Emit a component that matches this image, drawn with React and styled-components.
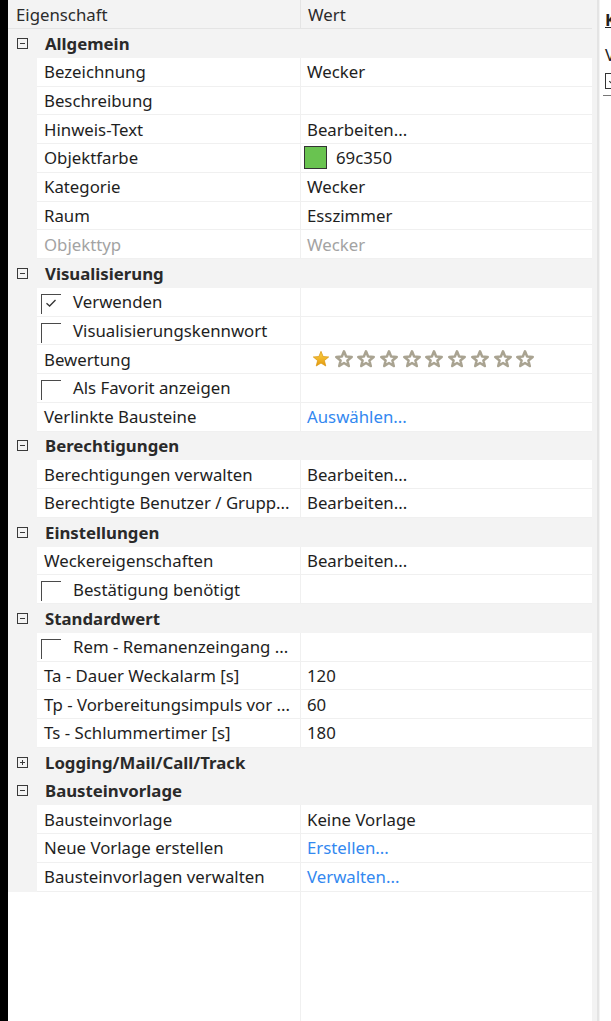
import React from 'react';
import styled, { createGlobalStyle } from 'styled-components';

const GlobalStyle = createGlobalStyle`
  html, body {
    margin: 0;
    padding: 0;
    background: #ffffff;
  }
  body {
    font-family: "Noto Sans", "Open Sans", sans-serif;
    font-size: 16.8px;
    color: #1e1e1e;
  }
`;

const ROW = '28.75px';

const Page = styled.div`
  display: flex;
  width: 611px;
  height: 1021px;
  overflow: hidden;
`;

const Edge = styled.div`
  width: 8px;
  flex: none;
  background: #000;
`;

const Grid = styled.div`
  width: 584px;
  flex: none;
  display: flex;
  flex-direction: column;
  background: #fff;
`;

const Header = styled.div`
  display: grid;
  grid-template-columns: 292px 1fr;
  height: 29px;
  flex: none;
  background: #f3f3f3;
  box-sizing: border-box;
  border-bottom: 1px solid #e4e4e4;
  color: #2b2b2b;

  span {
    display: flex;
    align-items: center;
    padding-left: 8px;
  }
  span + span {
    border-left: 1px solid #e4e4e4;
    padding-left: 7px;
  }
`;

const Rows = styled.div`
  display: flex;
  flex-direction: column;
`;

const Category = styled.div`
  display: flex;
  align-items: center;
  height: ${ROW};
  background: #f3f3f3;
  font-weight: 700;
  color: #2a2a2a;
`;

const Expander = styled.span`
  position: relative;
  width: 11px;
  height: 11px;
  box-sizing: border-box;
  border: 1px solid #3a3a3a;
  margin: 0 17px 0 9px;
  flex: none;

  &::before,
  &::after {
    content: '';
    position: absolute;
    background: #3a3a3a;
  }
  &::before {
    left: 2px;
    right: 2px;
    top: 4px;
    height: 1px;
  }
  &::after {
    display: ${(p) => (p.$open ? 'none' : 'block')};
    top: 2px;
    bottom: 2px;
    left: 4px;
    width: 1px;
  }
`;

const Item = styled.div`
  display: grid;
  grid-template-columns: 29px 263px 1fr;
  height: ${ROW};
  box-sizing: border-box;
`;

const Indent = styled.span`
  background: #f3f3f3;
`;

const Name = styled.span`
  display: flex;
  align-items: center;
  background: #fff;
  padding-left: ${(p) => (p.$check ? '4px' : '7px')};
  border-bottom: 1px solid #f0f0f0;
  color: ${(p) => (p.$disabled ? '#a3a3a3' : '#1e1e1e')};
  white-space: nowrap;
  overflow: hidden;
`;

const Value = styled.span`
  display: flex;
  align-items: center;
  gap: 9px;
  background: #fff;
  padding-left: 6px;
  border-left: 1px solid #f0f0f0;
  border-bottom: 1px solid #f0f0f0;
  color: ${(p) => (p.$disabled ? '#a3a3a3' : p.$link ? '#3388f0' : '#1e1e1e')};
  white-space: nowrap;
`;

const CheckBox = styled.span`
  width: 20px;
  height: 20px;
  margin-top: 6px;
  align-self: flex-start;
  box-sizing: border-box;
  border-top: 1.5px solid #4a4a4a;
  border-left: 1.5px solid #4a4a4a;
  margin-right: 12px;
  flex: none;
  display: flex;
  align-items: center;
  justify-content: center;

  svg {
    margin: -2px 0 0 -1px;
  }
`;

const Swatch = styled.span`
  width: 23px;
  height: 23px;
  margin-left: -3px;
  box-sizing: border-box;
  border: 1px solid #333;
  background: ${(p) => p.$color};
  flex: none;
`;

const Stars = styled.span`
  display: flex;
  gap: 4.7px;
  margin-left: 5px;
`;

const Filler = styled.div`
  flex: 1;
  display: grid;
  grid-template-columns: 292px 1fr;

  span + span {
    border-left: 1px solid #f0f0f0;
  }
`;

const Splitter = styled.div`
  width: 8px;
  flex: none;
  background: linear-gradient(
    to right,
    #f3f3f3 0,
    #f3f3f3 5px,
    #e4e4e4 5px,
    #e4e4e4 7px,
    #f3f3f3 7px
  );
`;

const Side = styled.div`
  flex: 1;
  background: #fff;
  overflow: hidden;
  padding-left: 5px;
  display: flex;
  flex-direction: column;
  white-space: nowrap;
`;

const SideLabel = styled.div`
  height: 20px;
  margin-top: ${(p) => p.$top}px;
  line-height: 20px;
  text-decoration: ${(p) => (p.$underline ? 'underline' : 'none')};
  font-weight: ${(p) => (p.$underline ? 700 : 400)};
  color: #222;
`;

const SideCheck = styled.div`
  width: 16px;
  height: 16px;
  margin-top: 8px;
  box-sizing: border-box;
  border: 1.5px solid #333;
  display: flex;
  align-items: center;
  justify-content: center;
`;

const SideRule = styled.div`
  height: 1px;
  margin: 6px 0 0 -2px;
  background: #777;
`;

const Tick = ({ size = 12 }) => (
  <svg width={size} height={size} viewBox="0 0 12 12">
    <path d="M1.5 6.2 L4.6 9 L10.5 3" fill="none" stroke="#333" strokeWidth="1.3" />
  </svg>
);

const STAR = 'M10 1.5 L12.35 7.26 L18.56 7.72 L13.8 11.74 L15.29 17.78 L10 14.5 L4.71 17.78 L6.2 11.74 L1.44 7.72 L7.65 7.26 Z';

const Star = ({ filled }) => (
  <svg width="18" height="18" viewBox="0 0 20 20">
    <defs>
      <linearGradient id="gold" x1="0" y1="0" x2="0" y2="1">
        <stop offset="0" stopColor="#fcd34a" />
        <stop offset="1" stopColor="#e49a0c" />
      </linearGradient>
    </defs>
    {filled ? (
      <path d={STAR} fill="url(#gold)" stroke="#d99510" strokeWidth="0.8" strokeLinejoin="round" />
    ) : (
      <path d={STAR} fill="#fff" stroke="#a9a391" strokeWidth="2.8" strokeLinejoin="round" />
    )}
  </svg>
);

const sections = [
  {
    title: 'Allgemein',
    items: [
      { name: 'Bezeichnung', value: 'Wecker' },
      { name: 'Beschreibung', value: '' },
      { name: 'Hinweis-Text', value: 'Bearbeiten...' },
      { name: 'Objektfarbe', value: '69c350', color: '#69c350' },
      { name: 'Kategorie', value: 'Wecker' },
      { name: 'Raum', value: 'Esszimmer' },
      { name: 'Objekttyp', value: 'Wecker', disabled: true },
    ],
  },
  {
    title: 'Visualisierung',
    items: [
      { name: 'Verwenden', check: true, checked: true },
      { name: 'Visualisierungskennwort', check: true },
      { name: 'Bewertung', rating: 1 },
      { name: 'Als Favorit anzeigen', check: true },
      { name: 'Verlinkte Bausteine', value: 'Auswählen...', link: true },
    ],
  },
  {
    title: 'Berechtigungen',
    items: [
      { name: 'Berechtigungen verwalten', value: 'Bearbeiten...' },
      { name: 'Berechtigte Benutzer / Grupp...', value: 'Bearbeiten...' },
    ],
  },
  {
    title: 'Einstellungen',
    items: [
      { name: 'Weckereigenschaften', value: 'Bearbeiten...' },
      { name: 'Bestätigung benötigt', check: true },
    ],
  },
  {
    title: 'Standardwert',
    items: [
      { name: 'Rem - Remanenzeingang ...', check: true },
      { name: 'Ta - Dauer Weckalarm [s]', value: '120' },
      { name: 'Tp - Vorbereitungsimpuls vor ...', value: '60' },
      { name: 'Ts - Schlummertimer [s]', value: '180' },
    ],
  },
  { title: 'Logging/Mail/Call/Track', collapsed: true, items: [] },
  {
    title: 'Bausteinvorlage',
    items: [
      { name: 'Bausteinvorlage', value: 'Keine Vorlage' },
      { name: 'Neue Vorlage erstellen', value: 'Erstellen...', link: true },
      { name: 'Bausteinvorlagen verwalten', value: 'Verwalten...', link: true },
    ],
  },
];

function PropertyRow({ item }) {
  return (
    <Item>
      <Indent />
      <Name $check={item.check} $disabled={item.disabled}>
        {item.check && <CheckBox>{item.checked && <Tick />}</CheckBox>}
        {item.name}
      </Name>
      <Value $disabled={item.disabled} $link={item.link}>
        {item.color && <Swatch $color={item.color} />}
        {item.rating !== undefined && (
          <Stars>
            {Array.from({ length: 10 }, (_, i) => (
              <Star key={i} filled={i < item.rating} />
            ))}
          </Stars>
        )}
        {item.value}
      </Value>
    </Item>
  );
}

export default function App() {
  return (
    <>
      <GlobalStyle />
      <Page>
        <Edge />
        <Grid>
          <Header>
            <span>Eigenschaft</span>
            <span>Wert</span>
          </Header>
          <Rows>
            {sections.map((s) => (
              <React.Fragment key={s.title}>
                <Category>
                  <Expander $open={!s.collapsed} />
                  {s.title}
                </Category>
                {s.items.map((item) => (
                  <PropertyRow key={item.name + s.title} item={item} />
                ))}
              </React.Fragment>
            ))}
          </Rows>
          <Filler>
            <span />
            <span />
          </Filler>
        </Grid>
        <Splitter />
        <Side>
          <SideLabel $top={10} $underline>
            Kommentar
          </SideLabel>
          <SideLabel $top={15}>Verwenden</SideLabel>
          <SideCheck>
            <Tick size={10} />
          </SideCheck>
          <SideRule />
        </Side>
      </Page>
    </>
  );
}
